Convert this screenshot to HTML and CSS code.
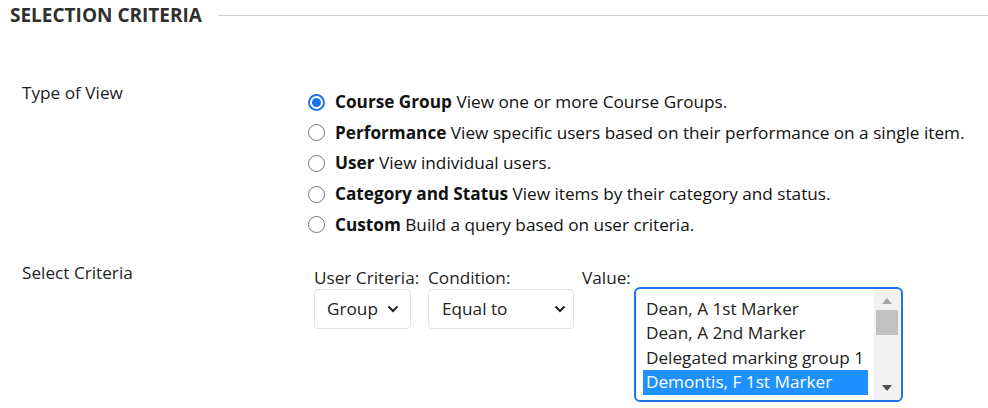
FILE: index.html
```html
<!DOCTYPE html>
<html>
<head>
<meta charset="utf-8">
<link rel="stylesheet" href="styles.css">
</head>
<body>
<div class="page">
  <div class="section-head">
    <h2>SELECTION CRITERIA</h2>
    <div class="rule"></div>
  </div>

  <div class="row row-view">
    <div class="label">Type of View</div>
    <div class="field">
      <ul class="radios">
        <li><span class="radio checked"></span><span><b>Course Group</b> View one or more Course Groups.</span></li>
        <li><span class="radio"></span><span><b>Performance</b> View specific users based on their performance on a single item.</span></li>
        <li><span class="radio"></span><span><b>User</b> View individual users.</span></li>
        <li><span class="radio"></span><span><b>Category and Status</b> View items by their category and status.</span></li>
        <li><span class="radio"></span><span><b>Custom</b> Build a query based on user criteria.</span></li>
      </ul>
    </div>
  </div>

  <div class="row row-criteria">
    <div class="label label-criteria">Select Criteria</div>
    <div class="field criteria">
      <div class="col col-user">
        <div class="sub">User Criteria:</div>
        <div class="select sel-group"><span>Group</span><svg class="chev" viewBox="0 0 12 8" width="12" height="8"><path d="M1.5 1.5 L6 6 L10.5 1.5" fill="none" stroke="#222" stroke-width="2"/></svg></div>
      </div>
      <div class="col col-cond">
        <div class="sub">Condition:</div>
        <div class="select sel-cond"><span>Equal to</span><svg class="chev" viewBox="0 0 12 8" width="12" height="8"><path d="M1.5 1.5 L6 6 L10.5 1.5" fill="none" stroke="#222" stroke-width="2"/></svg></div>
      </div>
      <div class="col col-value">
        <div class="sub">Value:</div>
      </div>
      <div class="listbox">
        <div class="options">
          <div class="opt">Dean, A 1st Marker</div>
          <div class="opt">Dean, A 2nd Marker</div>
          <div class="opt">Delegated marking group 1</div>
          <div class="opt selected">Demontis, F 1st Marker</div>
          <div class="opt">Demontis, F 2nd Marker</div>
        </div>
        <div class="scrollbar">
          <svg class="arrow" viewBox="0 0 10 6" width="10" height="6"><path d="M0 6 L5 0 L10 6 Z" fill="#a3a3a3"/></svg>
          <div class="track"><div class="thumb"></div></div>
          <svg class="arrow" viewBox="0 0 10 6" width="10" height="6"><path d="M0 0 L5 6 L10 0 Z" fill="#505050"/></svg>
        </div>
      </div>
    </div>
  </div>
</div>
</body>
</html>
```

FILE: styles.css
```css
* { box-sizing: border-box; }
html, body { margin: 0; padding: 0; background: #fff; }
body {
  font-family: "Open Sans", "Noto Sans", sans-serif;
  font-size: 17.2px;
  color: #111;
  width: 988px;
  height: 408px;
  overflow: hidden;
}
.page { padding-top: 3px; }
.section-head {
  display: flex;
  align-items: center;
  padding-left: 10px;
  height: 24px;
}
.section-head h2 {
  margin: 0;
  font-size: 19px;
  font-weight: 700;
  color: #2f2f2f;
  letter-spacing: 0;
  line-height: 24px;
}
.rule {
  flex: 1;
  height: 1px;
  background: #cfcfcf;
  margin-left: 16px;
}
.row { display: flex; }
.label {
  width: 308px;
  padding-left: 22px;
  color: #222;
  line-height: 22px;
}
.label-criteria { padding-top: 1px; }
.row-view { margin-top: 55px; }
.radios {
  list-style: none;
  margin: 0;
  padding: 0;
  padding-top: 5px;
}
.radios li {
  display: flex;
  align-items: center;
  height: 30.6px;
  line-height: 22px;
  white-space: nowrap;
}
.radios b { font-weight: 700; color: #111; }
.radio {
  width: 17px;
  height: 17px;
  border: 1px solid #767676;
  border-radius: 50%;
  margin-right: 10px;
  flex: none;
  position: relative;
}
.radio.checked { border: 2px solid #1a73e8; }
.radio.checked::after {
  content: "";
  position: absolute;
  left: 2px; top: 2px;
  width: 9px; height: 9px;
  border-radius: 50%;
  background: #1a73e8;
}
.row-criteria { margin-top: 21px; }
.criteria { display: flex; align-items: flex-start; padding-left: 6px; }
.col { display: flex; flex-direction: column; }
.sub { line-height: 20px; margin-top: 7px; margin-bottom: 1px; color: #222; white-space: nowrap; }
.col-user { width: 114px; }
.col-cond { width: 154px; }
.col-value { width: 52px; }
.select {
  height: 40px;
  border: 1px solid #e2e2e2;
  border-radius: 4px;
  display: flex;
  align-items: center;
  justify-content: space-between;
  padding: 0 11px 0 12px;
  color: #222;
  font-size: 17.2px;
}
.sel-group { width: 97px; }
.sel-cond { width: 146px; padding-left: 13px; padding-right: 7px; }
.chev { display: block; }
.listbox {
  margin-top: 26px;
  width: 269px;
  height: 115px;
  border: 2px solid #1a73e8;
  border-radius: 6px;
  display: flex;
  overflow: hidden;
}
.options {
  flex: 1;
  padding: 8px 6px 0 7px;
  overflow: hidden;
}
.opt {
  height: 24.5px;
  line-height: 24px;
  font-size: 17.2px;
  color: #222;
  padding-left: 3px;
  white-space: nowrap;
}
.opt.selected { background: #1e90ff; color: #fff; }
.scrollbar {
  width: 26px;
  background: #f1f1f1;
  display: flex;
  flex-direction: column;
  align-items: center;
  padding-top: 9px;
  margin-right: 1px;
}
.arrow { display: block; flex: none; }
.track { flex: 1; width: 100%; padding: 6px 2px 0 2px; }
.thumb { height: 25px; background: #c1c1c1; }
.scrollbar .arrow:last-child { margin-bottom: 9px; }
```
